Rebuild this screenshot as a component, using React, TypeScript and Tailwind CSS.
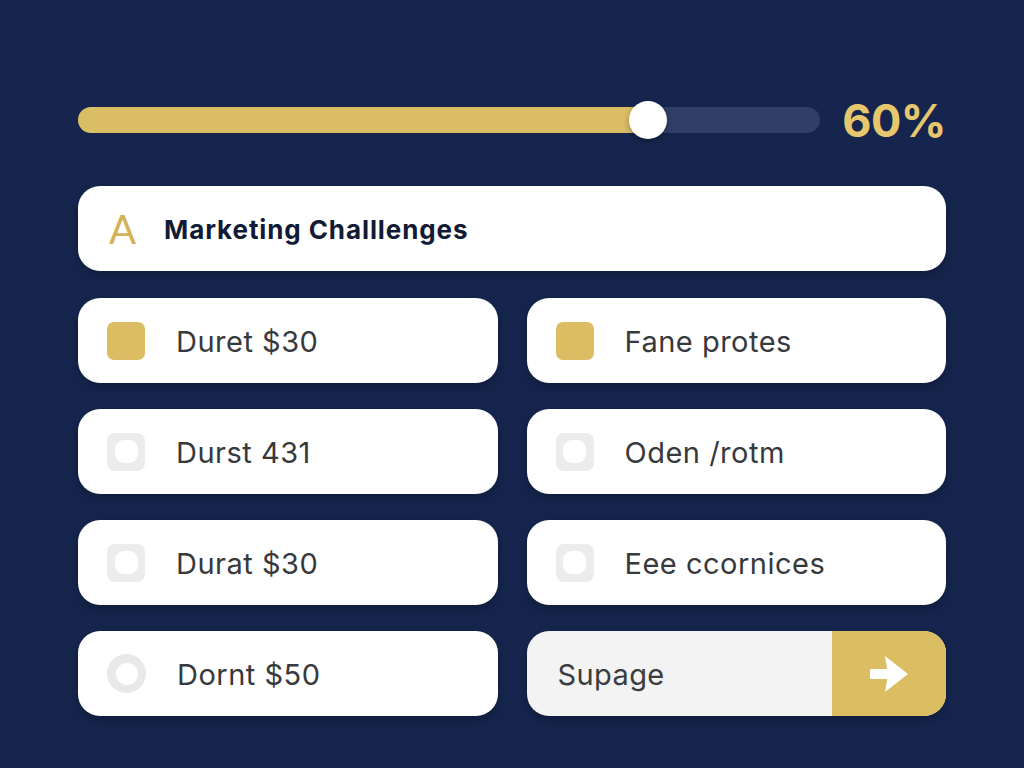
type Option = {
  label: string;
  state: "checked" | "empty" | "ring";
};

const LEFT: Option[] = [
  { label: "Duret $30", state: "checked" },
  { label: "Durst 431", state: "empty" },
  { label: "Durat $30", state: "empty" },
  { label: "Dornt $50", state: "ring" },
];

const RIGHT: Option[] = [
  { label: "Fane protes", state: "checked" },
  { label: "Oden /rotm", state: "empty" },
  { label: "Eee ccornices", state: "empty" },
];

function Box({ state }: { state: Option["state"] }) {
  if (state === "checked") {
    return <div className="w-[38px] h-[38px] rounded-[7px] bg-[#dcbd63] shrink-0" />;
  }
  if (state === "ring") {
    return (
      <div className="w-[39px] h-[39px] rounded-full bg-[#e9e9e9] flex items-center justify-center shrink-0">
        <div className="w-[22px] h-[22px] rounded-full bg-white" />
      </div>
    );
  }
  return (
    <div className="w-[38px] h-[38px] rounded-[8px] bg-[#ececec] flex items-center justify-center shrink-0">
      <div className="w-[23px] h-[23px] rounded-[9px] bg-white" />
    </div>
  );
}

function OptionCard({ opt }: { opt: Option }) {
  return (
    <div className="h-[85px] rounded-[22px] bg-white flex items-center pl-[29px] gap-[31px] shadow-[0_4px_10px_rgba(0,0,0,0.25)]">
      <Box state={opt.state} />
      <span className="pt-[3px] text-[29px] text-[#37393c] tracking-[0.5px]">{opt.label}</span>
    </div>
  );
}

export default function App() {
  return (
    <div
      className="w-[1024px] h-[768px] bg-[#15254d] pt-[100px] px-[78px]"
      style={{ fontFamily: "Inter, 'Open Sans', sans-serif" }}
    >
      {/* progress */}
      <div className="flex items-center h-[40px]">
        <div className="relative w-[742px] h-[26px] rounded-full bg-[#2f3f66]">
          <div className="h-full w-[570px] rounded-full bg-[#dbbd66]" />
          <div className="absolute left-[551px] top-[-6px] w-[38px] h-[38px] rounded-full bg-white shadow-[0_2px_6px_rgba(0,0,0,0.3)]" />
        </div>
        <span className="ml-auto text-[45px] font-bold text-[#e6c76e] leading-none tracking-[-0.5px]">60%</span>
      </div>

      {/* header */}
      <div className="mt-[46px] h-[85px] rounded-[22px] bg-white flex items-center pl-[31px] shadow-[0_4px_10px_rgba(0,0,0,0.25)]">
        <span className="text-[40px] text-[#d4b257] leading-none" style={{ fontFamily: "Lato, sans-serif" }}>A</span>
        <span className="ml-[28px] pt-[2px] text-[26px] font-bold text-[#121b36] tracking-[0.9px]">Marketing Challlenges</span>
      </div>

      {/* options */}
      <div className="mt-[27px] grid grid-cols-2 gap-x-[29px] gap-y-[26px]">
        {LEFT.map((opt, i) => (
          <>
            <OptionCard key={"l" + i} opt={opt} />
            {i < 3 ? (
              <OptionCard key={"r" + i} opt={RIGHT[i]} />
            ) : (
              <div key="input" className="h-[85px] rounded-[22px] bg-[#f3f3f3] flex overflow-hidden shadow-[0_4px_10px_rgba(0,0,0,0.25)]">
                <div className="flex-1 flex items-center pl-[31px] pt-[3px] text-[29px] text-[#3a3c40] tracking-[0.4px]">Supage</div>
                <div className="w-[114px] bg-[#dbbd64] flex items-center justify-center">
                  <svg width="38" height="36" viewBox="0 0 38 36" fill="white">
                    <rect x="0" y="13" width="18" height="10" rx="1" />
                    <path d="M15 0 L38 18 L15 36 L18 18 Z" />
                  </svg>
                </div>
              </div>
            )}
          </>
        ))}
      </div>
    </div>
  );
}
